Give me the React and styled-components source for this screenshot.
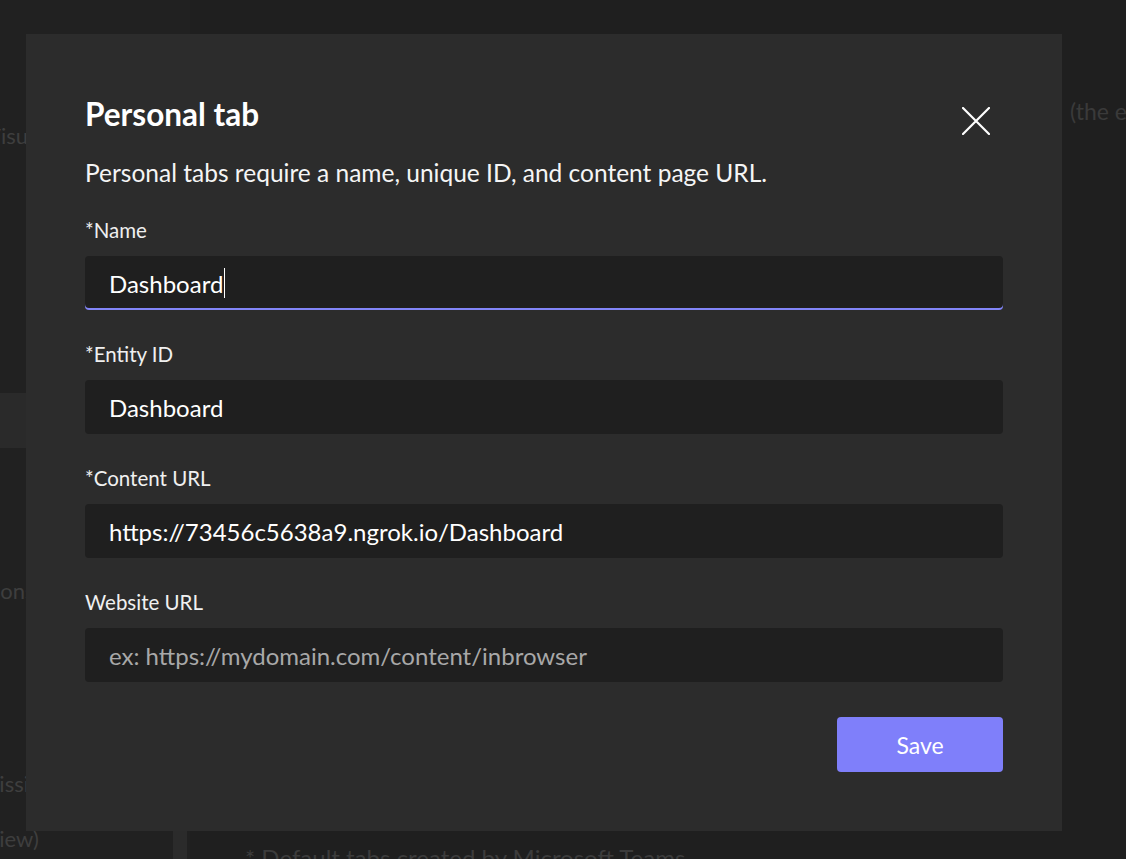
import React from 'react';
import styled, { createGlobalStyle } from 'styled-components';

const GlobalStyle = createGlobalStyle`
html, body {
  margin: 0;
  padding: 0;
  background: #1f1f1f;
  overflow: hidden;
}
* {
  box-sizing: border-box;
}
body {
  font-family: Lato, "Open Sans", "Liberation Sans", sans-serif;
}
`

// background page (dimmed behind the dialog)
const StyledPage = styled.div`
position: relative;
display: flex;
width: 1126px;
height: 859px;
overflow: hidden;
background: #1f1f1f;
`
const StyledSidebar = styled.div`
display: flex;
width: 190px;
flex-shrink: 0;
background: #212121;
overflow: hidden;
`
const StyledNavList = styled.div`
display: flex;
flex-direction: column;
flex: 1;
min-width: 0;
`
const StyledNavItem = styled.div`
display: flex;
align-items: center;
flex-shrink: 0;
height: ${p => p.$active ? 55 : 44}px;
margin-top: ${p => p.$gap}px;
background: ${p => p.$active ? '#2a2a2a' : 'transparent'};
white-space: nowrap;
color: #3e3e3e;
font-size: 22px;
`
const StyledNavLabel = styled.span`
margin-left: ${p => p.$shift}px;
`
const StyledTrack = styled.div`
width: 14px;
margin-right: 3px;
display: flex;
flex-direction: column;
`
const StyledThumb = styled.div`
margin-top: 600px;
height: 300px;
background: #2b2b2b;
`
const StyledMain = styled.div`
display: flex;
flex-direction: column;
flex: 1;
min-width: 0;
padding-left: 55px;
`
const StyledIntro = styled.div`
display: flex;
margin-top: 96px;
white-space: nowrap;
font-size: 23px;
line-height: 30px;
color: #3a3a3a;
`
const StyledIntroLead = styled.span`
flex: 0 0 825px;
overflow: hidden;
`
const StyledFootnote = styled.div`
margin-top: auto;
margin-bottom: -14px;
font-size: 24px;
line-height: 30px;
color: #3c3c3c;
white-space: nowrap;
`

// dialog
const StyledDialog = styled.div`
position: absolute;
left: 26px;
top: 34px;
width: 1036px;
height: 797px;
display: flex;
flex-direction: column;
padding: 62px 59px 59px 59px;
background: #2c2c2c;
color: #ffffff;
`
const StyledHeader = styled.div`
display: flex;
justify-content: space-between;
align-items: flex-start;
`
const StyledTitle = styled.h2`
margin: 0;
font-size: 31.5px;
line-height: 36px;
font-weight: 700;
`
const StyledClose = styled.button`
display: flex;
align-items: center;
justify-content: center;
width: 40px;
height: 40px;
margin: 5px 7px 0 0;
padding: 0;
border: none;
background: transparent;
color: #ffffff;
cursor: pointer;
`
const StyledDescription = styled.p`
margin: 18px 0 0 0;
font-size: 24.5px;
line-height: 28px;
color: #f5f5f5;
`
const StyledField = styled.div`
display: flex;
flex-direction: column;
margin-top: ${p => p.$first ? 30 : 31}px;
`
const StyledLabel = styled.label`
font-size: 20.5px;
line-height: 26px;
color: #f0f0f0;
`
const StyledBox = styled.div`
display: flex;
align-items: center;
height: 54px;
margin-top: 13px;
padding: 0 24px;
border-radius: 4px;
background: #1f1f1f;
box-shadow: ${p => p.$focused ? 'inset 0 -2px 0 #8285f7' : 'none'};
font-size: 24px;
color: ${p => p.$placeholder ? '#a8a8a8' : '#ffffff'};
white-space: nowrap;
`
const StyledCaret = styled.span`
display: inline-block;
width: 1px;
height: 30px;
margin-left: 1px;
background: #ffffff;
`
const StyledActions = styled.div`
display: flex;
justify-content: flex-end;
margin-top: 35px;
`
const StyledSave = styled.button`
width: 166px;
height: 55px;
border: none;
border-radius: 4px;
background: #7f7ffa;
color: #ffffff;
font-family: Lato, "Open Sans", "Liberation Sans", sans-serif;
font-size: 23px;
cursor: pointer;
`

const navItems = [
    { label: 'Visual assets', shift: -14, gap: 113 },
    { label: 'Personal tabs', shift: 40, gap: 236, active: true },
    { label: 'Extensions', shift: -70, gap: 120 },
    { label: 'Permissions', shift: -51, gap: 149 },
    { label: '(preview)', shift: -49, gap: 11 },
]

const fields = [
    { label: '*Name', value: 'Dashboard', focused: true },
    { label: '*Entity ID', value: 'Dashboard' },
    { label: '*Content URL', value: 'https://73456c5638a9.ngrok.io/Dashboard' },
    { label: 'Website URL', placeholder: 'ex: https://mydomain.com/content/inbrowser' },
]

const CloseIcon = () => (
    <svg width="28" height="28" viewBox="0 0 28 28" fill="none">
        <path d="M1 1L27 27M27 1L1 27" stroke="currentColor" strokeWidth="2.2" strokeLinecap="round" />
    </svg>
)

const App = () => {
    return (
        <StyledPage>
            <GlobalStyle />
            <StyledSidebar>
                <StyledNavList>
                    {navItems.map(item => (
                        <StyledNavItem key={item.label} $gap={item.gap} $active={item.active}>
                            <StyledNavLabel $shift={item.shift}>{item.label}</StyledNavLabel>
                        </StyledNavItem>
                    ))}
                </StyledNavList>
                <StyledTrack>
                    <StyledThumb />
                </StyledTrack>
            </StyledSidebar>
            <StyledMain>
                <StyledIntro>
                    <StyledIntroLead>Personal tabs let users pin your content page to the left rail of Teams</StyledIntroLead>
                    <span>(the entity ID must be unique)</span>
                </StyledIntro>
                <StyledFootnote>* Default tabs created by Microsoft Teams</StyledFootnote>
            </StyledMain>

            <StyledDialog>
                <StyledHeader>
                    <StyledTitle>Personal tab</StyledTitle>
                    <StyledClose aria-label="Close">
                        <CloseIcon />
                    </StyledClose>
                </StyledHeader>
                <StyledDescription>Personal tabs require a name, unique ID, and content page URL.</StyledDescription>
                {fields.map((f, i) => (
                    <StyledField key={f.label} $first={i === 0}>
                        <StyledLabel>{f.label}</StyledLabel>
                        <StyledBox $focused={f.focused} $placeholder={!f.value}>
                            {f.value || f.placeholder}
                            {f.focused && <StyledCaret />}
                        </StyledBox>
                    </StyledField>
                ))}
                <StyledActions>
                    <StyledSave>Save</StyledSave>
                </StyledActions>
            </StyledDialog>
        </StyledPage>
    )
}
export default App
